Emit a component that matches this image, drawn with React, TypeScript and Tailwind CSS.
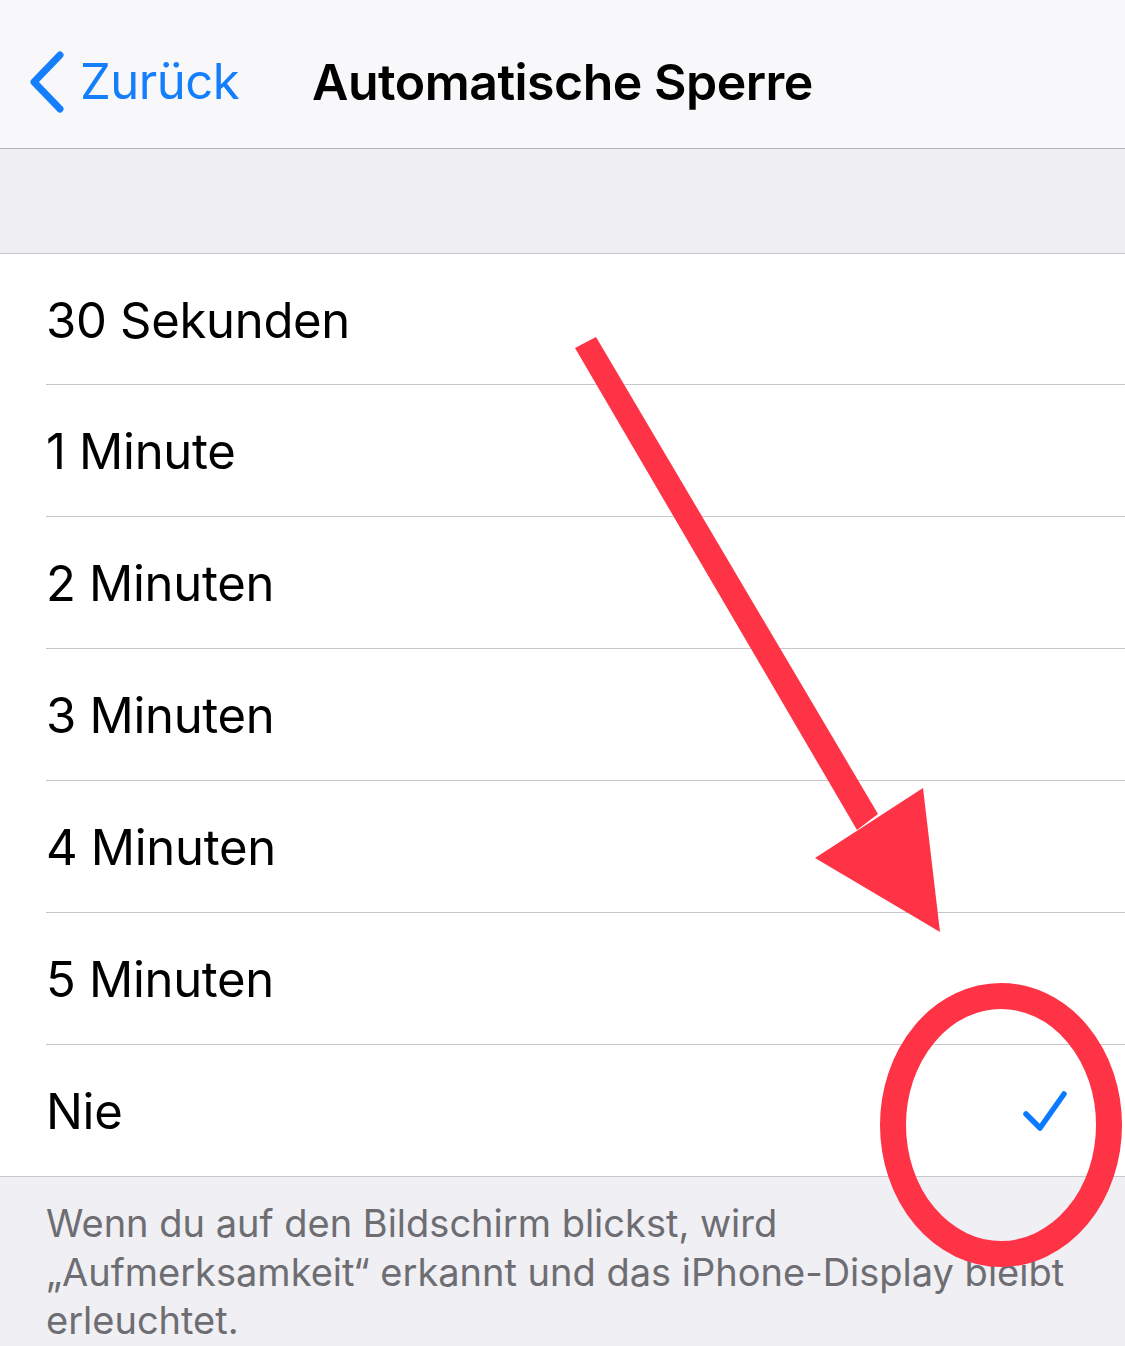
import React from 'react';

const options = ['30 Sekunden', '1 Minute', '2 Minuten', '3 Minuten', '4 Minuten', '5 Minuten', 'Nie'];

export default function App() {
  return (
    <div
      className="relative min-h-screen bg-[#efeff4] overflow-hidden"
      style={{ fontFamily: 'Inter, "Liberation Sans", sans-serif' }}
    >
      {/* NAV BAR */}
      <div className="grid grid-cols-[1fr_auto_1fr] items-center h-[149px] pt-[16px] bg-[#f8f8fa] border-b border-[#b4b4b8]">
        <div className="flex items-center pl-[26px]">
          <svg width="42" height="62" viewBox="0 0 42 62" className="mr-[12px]">
            <path d="M34 4 L8 31 L34 58" fill="none" stroke="#157efb" strokeWidth="7" strokeLinecap="round" strokeLinejoin="round" />
          </svg>
          <span className="text-[49px] text-[#157efb] tracking-[-0.5px]">Zurück</span>
        </div>
        <h1 className="text-[50px] font-semibold text-black tracking-[-0.5px]">Automatische Sperre</h1>
        <div />
      </div>

      {/* SPACER BAND */}
      <div className="h-[105px] border-b border-[#c8c7cc]" />

      {/* OPTIONS */}
      <div className="bg-white border-b border-[#c8c7cc]">
        {options.map((opt, i) => (
          <div key={opt} className="pl-[46px]">
            <div
              className={`flex items-center justify-between pr-[58px] ${
                i === 0 || i === options.length - 1 ? 'h-[131px]' : 'h-[132px]'
              } ${i < options.length - 1 ? 'border-b border-[#c8c7cc]' : ''}`}
            >
              <span className="text-[49px] text-black tracking-[-0.3px] pt-[3px]">{opt}</span>
              {opt === 'Nie' && (
                <svg width="44" height="44" viewBox="0 0 44 44">
                  <path d="M3 25 L17 39 L41 5" fill="none" stroke="#0a7aff" strokeWidth="5.5" strokeLinecap="round" strokeLinejoin="round" />
                </svg>
              )}
            </div>
          </div>
        ))}
      </div>

      {/* FOOTER NOTE */}
      <p className="px-[46px] pt-[22px] text-[38px] leading-[48.5px] text-[#6d6d72] whitespace-nowrap">
        Wenn du auf den Bildschirm blickst, wird
        <br />
        „Aufmerksamkeit“ erkannt und das iPhone-Display bleibt
        <br />
        erleuchtet.
      </p>

      {/* ANNOTATION OVERLAY */}
      <svg className="absolute inset-0 pointer-events-none" width="1125" height="1346" viewBox="0 0 1125 1346">
        <polygon points="575,348 596,337 878,814 857,830" fill="#fe3346" />
        <polygon points="815,858 923,788 940,932" fill="#fe3346" />
        <ellipse cx="1001" cy="1125" rx="108" ry="129" fill="none" stroke="#fe3346" strokeWidth="26" />
      </svg>
    </div>
  );
}
